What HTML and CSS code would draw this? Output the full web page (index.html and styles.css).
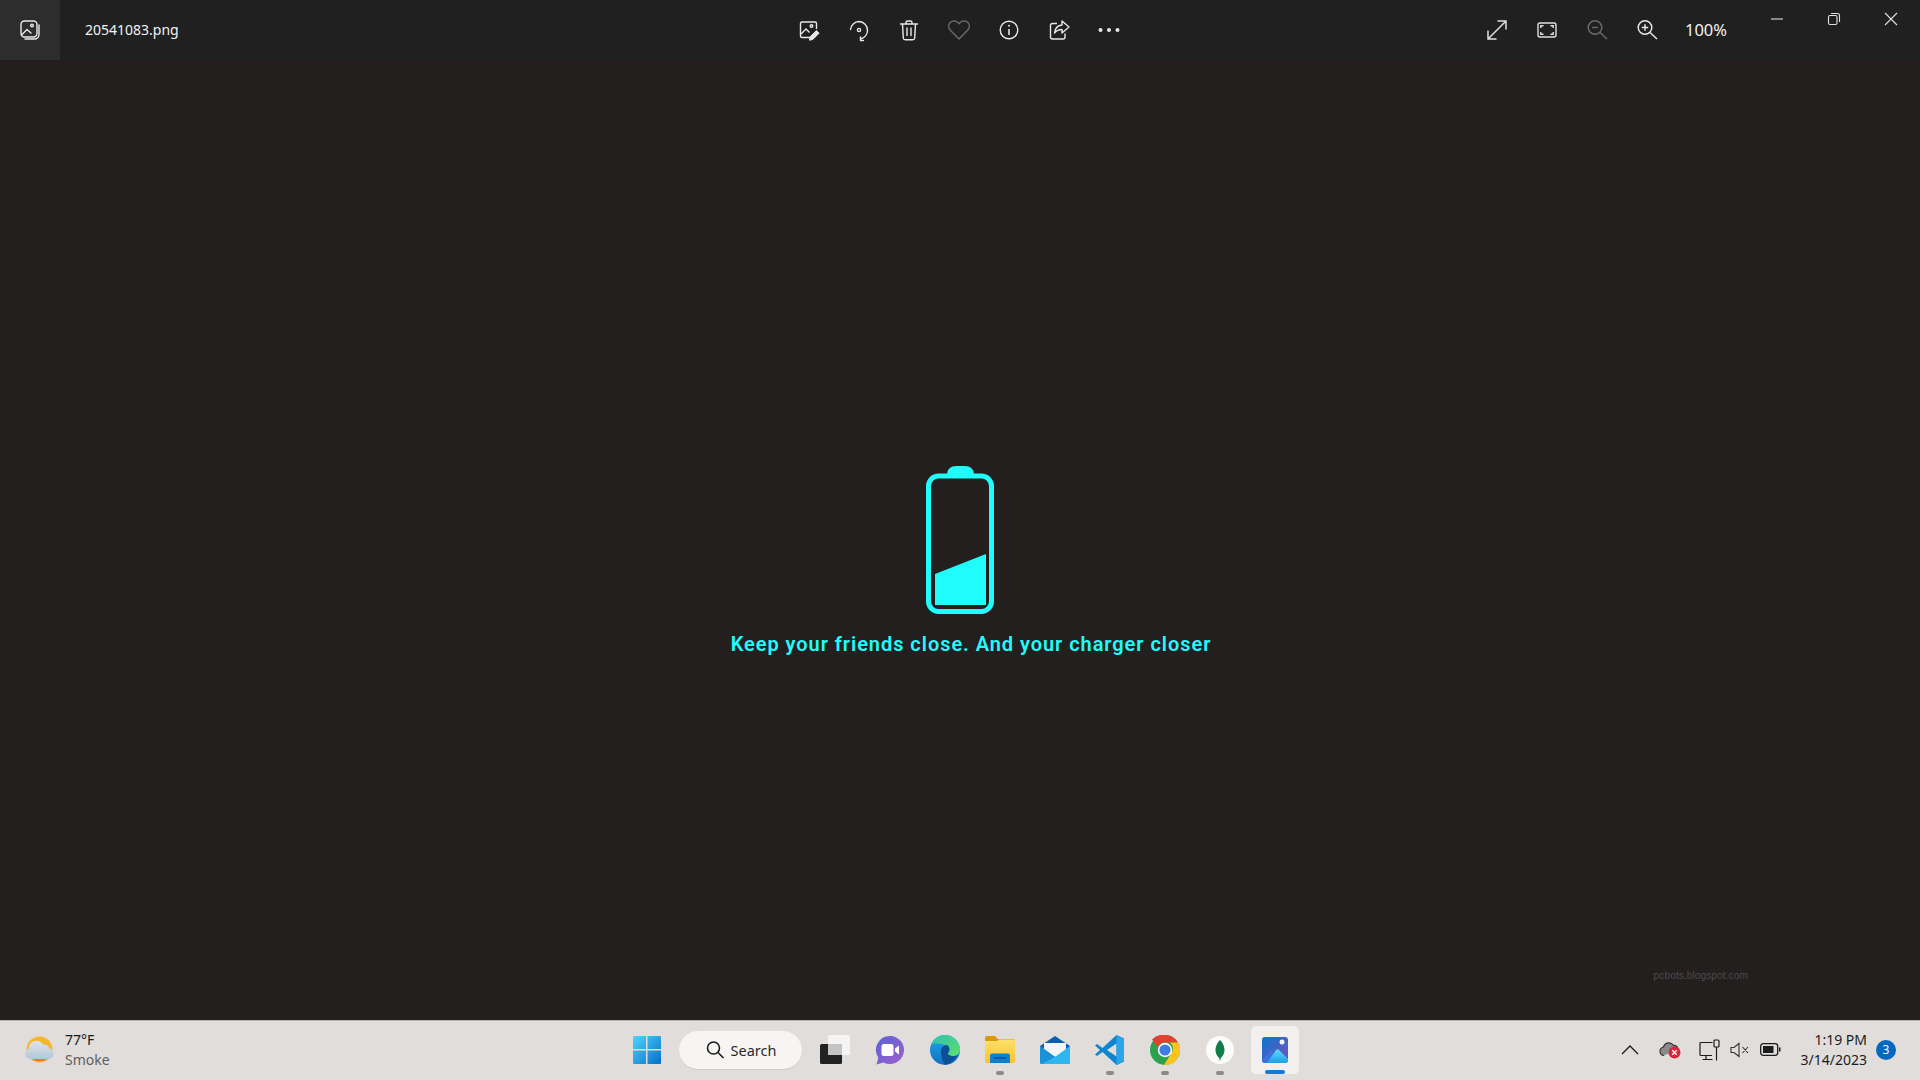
FILE: index.html
```html
<!DOCTYPE html>
<html lang="en">
<head>
    <meta charset="UTF-8">
    <meta name="viewport" content="width=device-width, initial-scale=1.0">
    <title>20541083.png</title>
    <link rel="stylesheet" href="styles.css">
</head>
<body>
    <header class="toolbar">
        <div class="app-icon">
            <svg width="24" height="24" viewBox="0 0 24 24" fill="none" stroke="#e8e8e8" stroke-width="1.4">
                <rect x="3" y="3" width="16" height="16" rx="3.5"/>
                <path d="M3.5 17l5.5-5.5 4 3.5M21 7v9.5a4.5 4.5 0 0 1-4.5 4.5H7" stroke-linecap="round" stroke-linejoin="round"/>
                <circle cx="14" cy="7.5" r="1.3"/>
            </svg>
        </div>
        <div class="file-name">20541083.png</div>
        <div class="tools">
            <button class="tool">
                <svg width="24" height="24" viewBox="0 0 24 24" fill="none" stroke="#e8e8e8" stroke-width="1.4">
                    <path d="M13 19.5H5a1.5 1.5 0 0 1-1.5-1.5V5.5A1.5 1.5 0 0 1 5 4h13a1.5 1.5 0 0 1 1.5 1.5V11"/>
                    <path d="M4 16l5-5 3.5 3.5"/>
                    <circle cx="14.5" cy="8" r="1.3"/>
                    <path d="M12.5 22.2l.6-3.4 6.3-6.3 2.7 2.7-6.3 6.3z" fill="#e8e8e8" stroke-width="1"/>
                </svg>
            </button>
            <button class="tool">
                <svg width="24" height="24" viewBox="0 0 24 24" fill="none" stroke="#e8e8e8" stroke-width="1.4" stroke-linecap="round" stroke-linejoin="round">
                    <path d="M3.5 11.5A8.8 8.8 0 0 1 12 3.5a8.8 8.8 0 0 1 8.5 8.8 8.8 8.8 0 0 1-6.5 8.5"/>
                    <path d="M16.5 22.5h-3V19"/>
                    <circle cx="12" cy="12" r="1.6"/>
                </svg>
            </button>
            <button class="tool">
                <svg width="24" height="24" viewBox="0 0 24 24" fill="none" stroke="#e8e8e8" stroke-width="1.4" stroke-linecap="round" stroke-linejoin="round">
                    <path d="M3.5 6h17M9 6V4.5A1.5 1.5 0 0 1 10.5 3h3A1.5 1.5 0 0 1 15 4.5V6M5.5 6l.8 14a2 2 0 0 0 2 1.8h7.4a2 2 0 0 0 2-1.8l.8-14M10 10v7.5M14 10v7.5"/>
                </svg>
            </button>
            <button class="tool">
                <svg width="24" height="24" viewBox="0 0 24 24" fill="none" stroke="#6a6a6a" stroke-width="1.5" stroke-linejoin="round">
                    <path d="M12 21L3.2 12a5.6 5.6 0 0 1 0-7.5 5.4 5.4 0 0 1 7.6 0L12 5.7l1.2-1.2a5.4 5.4 0 0 1 7.6 0 5.6 5.6 0 0 1 0 7.5z"/>
                </svg>
            </button>
            <button class="tool">
                <svg width="24" height="24" viewBox="0 0 24 24" fill="none" stroke="#e8e8e8" stroke-width="1.4">
                    <circle cx="12" cy="12" r="8.8"/>
                    <path d="M12 11v6" stroke-width="1.6"/>
                    <circle cx="12" cy="7.8" r="1" fill="#e8e8e8" stroke="none"/>
                </svg>
            </button>
            <button class="tool">
                <svg width="24" height="24" viewBox="0 0 24 24" fill="none" stroke="#e8e8e8" stroke-width="1.4" stroke-linejoin="round">
                    <path d="M10 5.5H5.5a2 2 0 0 0-2 2V19a2 2 0 0 0 2 2H16a2 2 0 0 0 2-2v-3.5"/>
                    <path d="M15 3l7 6-7 6v-3.5c-3.500 0-5.500 1-7.500 3.500 .5-4.500 3-7.500 7.500-8z"/>
                </svg>
            </button>
            <button class="tool">
                <svg width="24" height="24" viewBox="0 0 24 24" fill="#e8e8e8">
                    <circle cx="3.5" cy="12" r="2"/>
                    <circle cx="12" cy="12" r="2"/>
                    <circle cx="20.5" cy="12" r="2"/>
                </svg>
            </button>
        </div>
        <div class="view-tools">
            <button class="tool">
                <svg width="24" height="24" viewBox="0 0 24 24" fill="none" stroke="#e0e0e0" stroke-width="1.5">
                    <path d="M3 21L21 3M12.5 3H21v8.5M3 12.5V21h8.5"/>
                </svg>
            </button>
            <button class="tool">
                <svg width="24" height="24" viewBox="0 0 24 24" fill="none" stroke="#e0e0e0" stroke-width="1.4">
                    <rect x="3" y="5" width="18" height="14" rx="2"/>
                    <path d="M5.8 10V7.8h2.7M15.5 7.8h2.7V10M18.2 14v2.200h-2.700M8.500 16.200H5.800V14"/>
                </svg>
            </button>
            <button class="tool">
                <svg width="24" height="24" viewBox="0 0 24 24" fill="none" stroke="#6a6a6a" stroke-width="1.5">
                    <circle cx="10" cy="9.5" r="6.8"/>
                    <path d="M7 9.5h6M15 14.5l7 6.5"/>
                </svg>
            </button>
            <button class="tool">
                <svg width="24" height="24" viewBox="0 0 24 24" fill="none" stroke="#e8e8e8" stroke-width="1.5">
                    <circle cx="10" cy="9.5" r="6.8"/>
                    <path d="M6.8 9.5h6.4M10 6.3v6.4M15 14.5l7 6.5"/>
                </svg>
            </button>
            <span class="zoom-level">100%</span>
        </div>
        <div class="window-controls">
            <button class="win-btn">
                <svg width="14" height="14" viewBox="0 0 14 14" stroke="#e0e0e0" stroke-width="1.1"><path d="M1 7h12"/></svg>
            </button>
            <button class="win-btn">
                <svg width="14" height="14" viewBox="0 0 14 14" fill="none" stroke="#e0e0e0" stroke-width="1.1">
                    <rect x="1.5" y="3.5" width="8.5" height="9" rx="1.5"/>
                    <path d="M4 1.5h6.5a2 2 0 0 1 2 2V10"/>
                </svg>
            </button>
            <button class="win-btn">
                <svg width="14" height="14" viewBox="0 0 14 14" stroke="#e0e0e0" stroke-width="1.1"><path d="M1 1l12 12M13 1L1 13"/></svg>
            </button>
        </div>
    </header>

    <main class="canvas">
        <svg class="battery" width="68" height="148" viewBox="0 0 68 148">
            <path d="M21 9C21 3 25 0 30 0h9c5 0 9 3 9 9z" fill="#1ffcfb"/>
            <rect x="2.5" y="10" width="63" height="135.5" rx="10" fill="none" stroke="#1ffcfb" stroke-width="5"/>
            <path d="M9 108L60 88V139H9z" fill="#1ffcfb"/>
        </svg>
        <p class="slogan">Keep your friends close. And your charger closer</p>
        <p class="watermark">pcbots.blogspot.com</p>
    </main>

    <footer class="taskbar">
        <div class="weather">
            <svg width="32" height="28" viewBox="0 0 32 28">
                <defs>
                    <linearGradient id="cloud" x1="0" y1="0" x2="0" y2="1">
                        <stop offset="0" stop-color="#e0e4e8"/>
                        <stop offset="1" stop-color="#b4c6d8"/>
                    </linearGradient>
                </defs>
                <circle cx="15.5" cy="13.5" r="13" fill="#f7b52c"/>
                <path d="M5 20a13 13 0 0 0 21 0z" fill="#f57c14"/>
                <path d="M6.5 23A5.5 5.5 0 0 1 5 12.3 7.5 7.5 0 0 1 19 8.5a6 6 0 0 1 6.5 3.8A5.5 5.5 0 0 1 25 23z" fill="url(#cloud)"/>
            </svg>
            <div class="weather-text">
                <span class="temp">77°F</span>
                <span class="cond">Smoke</span>
            </div>
        </div>
        <div class="apps">
            <div class="app">
                <svg width="30" height="30" viewBox="0 0 30 30">
                    <defs>
                        <linearGradient id="win" x1="0" y1="0" x2="1" y2="1">
                            <stop offset="0" stop-color="#4fd4fb"/>
                            <stop offset="1" stop-color="#0570c8"/>
                        </linearGradient>
                    </defs>
                    <path fill="url(#win)" d="M1 2a1 1 0 0 1 1-1h12v13H1zM15.5 1H28a1 1 0 0 1 1 1v12H15.5zM1 15.5h13V29H2a1 1 0 0 1-1-1zM15.5 15.5H29V28a1 1 0 0 1-1 1H15.5z"/>
                </svg>
            </div>
            <div class="search">
                <svg width="20" height="20" viewBox="0 0 20 20" fill="none" stroke="#1c1c1c" stroke-width="1.6">
                    <circle cx="8.5" cy="8" r="6"/>
                    <path d="M13 12.5l5.5 5.5"/>
                </svg>
                <span>Search</span>
            </div>
            <div class="app app-first">
                <svg width="30" height="30" viewBox="0 0 30 30">
                    <rect x="8" y="0" width="22" height="20" rx="1.5" fill="#f5f4f3"/>
                    <rect x="0" y="9" width="22" height="20" rx="1.5" fill="#222"/>
                    <rect x="8" y="9" width="14" height="11" fill="#c4c4c4"/>
                </svg>
            </div>
            <div class="app">
                <svg width="30" height="30" viewBox="0 0 30 30">
                    <defs>
                        <linearGradient id="teams" x1="0" y1="0" x2="1" y2="1">
                            <stop offset="0" stop-color="#5a63d8"/>
                            <stop offset="1" stop-color="#a05fc8"/>
                        </linearGradient>
                    </defs>
                    <path fill="url(#teams)" d="M15 1a14 14 0 1 1-6.5 26.4L1.5 29.5l1.8-6.8A14 14 0 0 1 15 1z"/>
                    <rect x="6.5" y="9" width="12" height="12" rx="2.5" fill="#fff"/>
                    <path d="M20 13.5l4-3v9l-4-3z" fill="#fff"/>
                </svg>
            </div>
            <div class="app">
                <svg width="30" height="30" viewBox="0 0 30 30">
                    <defs>
                        <linearGradient id="edge-a" x1="0" y1="0" x2="1" y2="1">
                            <stop offset="0" stop-color="#2fc0b0"/>
                            <stop offset="1" stop-color="#5ee06a"/>
                        </linearGradient>
                        <linearGradient id="edge-b" x1="0" y1="0" x2="0" y2="1">
                            <stop offset="0" stop-color="#1fa8e8"/>
                            <stop offset="1" stop-color="#1070c0"/>
                        </linearGradient>
                    </defs>
                    <circle cx="15" cy="15" r="15" fill="url(#edge-b)"/>
                    <path fill="url(#edge-a)" d="M1 10C3 4 9 0 15 0c8 0 15 6 15 14.5 0 4-3 6.500-7 6.500-3 0-5-1-5.500-2 2-1.500 2-6-2-8.500C11 8 4 7.500 1 10z"/>
                    <path fill="#0b4f96" d="M11 16c0-4 3-6 6-6 3 1.500 3.500 6.500.5 8.500 2 3 7 3.500 10 1.500-2.500 5.500-8 9.500-12 9.500-3-2-4.500-9-4.500-13.500z"/>
                </svg>
            </div>
            <div class="app open">
                <svg width="30" height="27" viewBox="0 0 30 27">
                    <defs>
                        <linearGradient id="folder" x1="0" y1="0" x2="0" y2="1">
                            <stop offset="0" stop-color="#fde06b"/>
                            <stop offset="1" stop-color="#f9c22d"/>
                        </linearGradient>
                    </defs>
                    <path d="M0 2a2 2 0 0 1 2-2h8l3 3h15a2 2 0 0 1 2 2v5H0z" fill="#d99a0a"/>
                    <path d="M0 5h12l2-1.5h14a2 2 0 0 1 2 2V25a2 2 0 0 1-2 2H2a2 2 0 0 1-2-2z" fill="url(#folder)"/>
                    <path d="M5 27v-7.5a2 2 0 0 1 2-2h16a2 2 0 0 1 2 2V27z" fill="#0f7fcf"/>
                    <path d="M9 22h12" stroke="#063f78" stroke-width="1.2"/>
                </svg>
            </div>
            <div class="app">
                <svg width="30" height="28" viewBox="0 0 30 28">
                    <path d="M0 10L15 0l15 10v16a2 2 0 0 1-2 2H2a2 2 0 0 1-2-2z" fill="#0b5fae"/>
                    <path d="M4 7h22v8L15 21 4 15z" fill="#f3f5f7"/>
                    <path d="M0 10l15 11 15-11v16a2 2 0 0 1-2 2H2a2 2 0 0 1-2-2z" fill="#2fb6ef"/>
                    <path d="M0 10l15 11-13 7a2 2 0 0 1-2-2z" fill="#1a92d8"/>
                </svg>
            </div>
            <div class="app open">
                <svg width="30" height="30" viewBox="0 0 30 30">
                    <path d="M21.5 0L29 3.5v23L21.5 30 7.5 17 2 21 0 19.5l5-4.5-5-4.500L2 9l5.500 4zM21.500 8.500L12 15l9.500 6.500z" fill="#0f85d0"/>
                    <path d="M21.5 0L29 3.5v23L21.5 30z" fill="#2aa5ea"/>
                </svg>
            </div>
            <div class="app open">
                <svg width="30" height="30" viewBox="0 0 30 30">
                    <circle cx="15" cy="15" r="15" fill="#2ca24d"/>
                    <path d="M15 0a15 15 0 0 1 13 7.5H15a7.5 7.5 0 0 0-7 4.7L2 4.5A15 15 0 0 1 15 0z" fill="#e2412f"/>
                    <path d="M28 7.5A15 15 0 0 1 14 30l7-11.5a7.5 7.5 0 0 0-1-11z" fill="#fbc31b"/>
                    <circle cx="15" cy="15" r="7.2" fill="#fff"/>
                    <circle cx="15" cy="15" r="5.6" fill="#3d7ce6"/>
                </svg>
            </div>
            <div class="app open">
                <svg width="30" height="30" viewBox="0 0 30 30">
                    <circle cx="15" cy="15" r="14" fill="#fbfbfb"/>
                    <path d="M15 5c3.5 3.5 4.5 7 4.5 10 0 4-2.5 7-3.800 8L15.300 25.500h-.7L14.300 23c-1.300-1-3.800-4-3.800-8 0-3 1-6.500 4.500-10z" fill="#0f7d45"/>
                </svg>
            </div>
            <div class="app active">
                <svg width="26" height="26" viewBox="0 0 26 26">
                    <defs>
                        <linearGradient id="photo" x1="0" y1="0" x2="1" y2="1">
                            <stop offset="0" stop-color="#0d74cf"/>
                            <stop offset="1" stop-color="#7a52b8"/>
                        </linearGradient>
                        <linearGradient id="peak" x1="0" y1="0" x2="0" y2="1">
                            <stop offset="0" stop-color="#5fdcfa"/>
                            <stop offset="1" stop-color="#1d9fe6"/>
                        </linearGradient>
                    </defs>
                    <rect width="26" height="26" rx="3" fill="url(#photo)"/>
                    <path d="M0 23l9-10 4 4-5 9H3a3 3 0 0 1-3-3z" fill="#3f6fd8"/>
                    <path d="M5 26l9-13a2 2 0 0 1 3 0l9 9v1a3 3 0 0 1-3 3z" fill="url(#peak)"/>
                    <circle cx="20" cy="5" r="2.5" fill="#f3f3f5"/>
                </svg>
            </div>
        </div>
        <div class="tray">
            <svg class="tray-chevron" width="18" height="12" viewBox="0 0 18 12" fill="none" stroke="#1c1c1c" stroke-width="1.3"><path d="M1 10l8-8 8 8"/></svg>
            <svg class="tray-cloud" width="22" height="18" viewBox="0 0 22 18">
                <path d="M5 14.5a4.3 4.3 0 0 1-.5-8.5 5.5 5.5 0 0 1 10-1.5A4 4 0 0 1 19 8" fill="#8a8a8a" stroke="#333" stroke-width="1.2"/>
                <circle cx="15.5" cy="11.5" r="6" fill="#d5283b"/>
                <path d="M13.3 9.3l4.4 4.4M17.7 9.3l-4.4 4.4" stroke="#fff" stroke-width="1.4"/>
            </svg>
            <svg class="tray-net" width="22" height="22" viewBox="0 0 22 22" fill="none" stroke="#1c1c1c" stroke-width="1.2">
                <path d="M13.5 3.5H2A1 1 0 0 0 1 4.5v11a1 1 0 0 0 1 1h11M7 16.5V20M3.5 20.5h10"/>
                <rect x="15" y="1" width="5" height="7" rx="1"/>
                <path d="M17.5 8v13.5"/>
            </svg>
            <svg class="tray-sound" width="20" height="16" viewBox="0 0 20 16" fill="none" stroke="#333" stroke-width="1.1">
                <path d="M1 5.5h3L9 1.5v13L4 10.5H1zM12.5 5l5.5 6M18 5l-5.5 6"/>
            </svg>
            <svg class="tray-battery" width="21" height="13" viewBox="0 0 21 13">
                <rect x=".7" y=".7" width="17" height="11.6" rx="2.5" fill="none" stroke="#1c1c1c" stroke-width="1.3"/>
                <rect x="3" y="3" width="10.5" height="7" fill="#1c1c1c"/>
                <path d="M19 4.5h1.5v4H19z" fill="#1c1c1c"/>
            </svg>
            <div class="clock">
                <span>1:19 PM</span>
                <span>3/14/2023</span>
            </div>
            <span class="badge">3</span>
        </div>
    </footer>
</body>
</html>
```

FILE: styles.css
```css
* {
    margin: 0;
    padding: 0;
    box-sizing: border-box;
    font-family: "Noto Sans", "Open Sans", sans-serif;
}
body {
    width: 1920px;
    height: 1080px;
    display: flex;
    flex-direction: column;
    overflow: hidden;
    background: #231f1f;
}
button {
    border: none;
    background: none;
    display: flex;
    justify-content: center;
    align-items: center;
}

/* top bar */
.toolbar {
    height: 60px;
    display: flex;
    background: #202020;
    color: #f2f2f2;
}
.app-icon {
    width: 60px;
    height: 60px;
    display: flex;
    justify-content: center;
    align-items: center;
    background: #2d2d2d;
}
.file-name {
    width: 724px;
    padding-left: 25px;
    line-height: 60px;
    font-size: 14px;
}
.tools {
    display: flex;
    width: 688px;
}
.tool {
    width: 50px;
    height: 60px;
}
.view-tools {
    display: flex;
    align-items: center;
}
.zoom-level {
    width: 68px;
    text-align: center;
    font-size: 16.5px;
    margin-bottom: 2px;
}
.window-controls {
    display: flex;
    margin-left: auto;
    width: 172px;
}
.win-btn {
    width: 57px;
    height: 38px;
}

/* the picture */
.canvas {
    flex: 1;
    display: flex;
    flex-direction: column;
    align-items: center;
    padding-top: 406px;
}
.battery {
    display: block;
}
.slogan {
    margin-top: 18px;
    margin-left: 22px;
    font-family: Roboto, sans-serif;
    font-size: 20px;
    font-weight: 600;
    line-height: 24px;
    letter-spacing: 0.95px;
    color: #1ffcfb;
}
.watermark {
    margin-top: 313px;
    margin-right: 172px;
    align-self: flex-end;
    font-family: "Liberation Sans", sans-serif;
    font-size: 10.3px;
    line-height: 14px;
    color: #4a4a4a;
}

/* taskbar */
.taskbar {
    height: 60px;
    padding-bottom: 2px;
    display: flex;
    align-items: center;
    background: #e0dddb;
    border-top: 1px solid #b9b7b5;
}
.weather {
    width: 619px;
    display: flex;
    align-items: center;
    padding-left: 24px;
    gap: 9px;
}
.weather-text {
    display: flex;
    flex-direction: column;
    font-size: 14px;
    line-height: 20px;
}
.temp {
    color: #1a1a1a;
}
.cond {
    color: #5f5f5f;
}
.apps {
    display: flex;
    align-items: center;
}
.app {
    position: relative;
    width: 55px;
    height: 48px;
    display: flex;
    justify-content: center;
    align-items: center;
    border-radius: 5px;
}
.app-first {
    margin-left: 5.5px;
}
.app.open::after {
    content: "";
    position: absolute;
    left: 23.5px;
    bottom: -1px;
    width: 8px;
    height: 4px;
    border-radius: 2px;
    background: #8a8a8a;
}
.app.active {
    width: 48px;
    margin-left: 3.5px;
    background: #f2f0ef;
}
.app.active::after {
    content: "";
    position: absolute;
    left: 14px;
    bottom: 0;
    width: 20px;
    height: 4px;
    border-radius: 2px;
    background: #0f7bd8;
}
.search {
    width: 123px;
    height: 38px;
    margin-left: 5px;
    display: flex;
    align-items: center;
    justify-content: center;
    gap: 6px;
    border-radius: 19px;
    background: #f6f5f4;
    box-shadow: 0 1px 1px rgba(0, 0, 0, 0.08);
    font-size: 14.5px;
    color: #2a2a2a;
}
.tray {
    margin-left: auto;
    width: 313px;
    display: flex;
    align-items: center;
}
.tray-chevron {
    margin-left: 14px;
}
.tray-cloud {
    margin-left: 20px;
}
.tray-net {
    margin-left: 18px;
}
.tray-sound {
    margin-left: 9px;
}
.tray-battery {
    margin-left: 10px;
}
.clock {
    width: 86px;
    display: flex;
    flex-direction: column;
    align-items: flex-end;
    font-size: 14px;
    line-height: 20px;
    color: #1c1c1c;
}
.badge {
    width: 20px;
    height: 20px;
    margin-left: 9px;
    border-radius: 50%;
    background: #0467c0;
    color: #fff;
    font-size: 12px;
    line-height: 20px;
    text-align: center;
}
```
